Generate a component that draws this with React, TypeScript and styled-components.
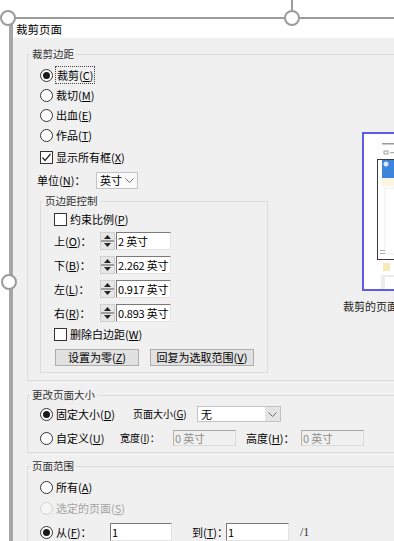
import { ReactNode } from 'react'
import styled, { createGlobalStyle } from 'styled-components'

const GlobalStyle = createGlobalStyle`
	html, body {
		margin: 0;
		padding: 0;
		background: #fff;
	}

	body {
		font-family: "Noto Sans CJK SC", "Noto Sans", sans-serif;
		font-size: 11px;
		line-height: 14px;
		color: #000;
	}
`

const Stage = styled.div`
	position: relative;
	display: flex;
	flex-direction: column;
	width: 394px;
	height: 541px;
	padding: 19px 0 0 13px;
	box-sizing: border-box;
	overflow: hidden;
	background: #fff;
`

const Dialog = styled.div`
	flex: 1;
	display: flex;
	flex-direction: column;
	width: 560px;
`

const TitleBar = styled.div`
	height: 19px;
	display: flex;
	align-items: center;
	padding-left: 3px;
	background: #fff;
	font-size: 11.5px;
`

const Body = styled.div`
	flex: 1;
	padding: 9px 0 0 14px;
	background: #f0f0f0;
`

type GroupProps = {
	$mt?: number
	$ml?: number
	$w?: number
}

const Group = styled.fieldset<GroupProps>`
	margin: ${({ $mt }) => $mt ?? 0}px 0 0 ${({ $ml }) => $ml ?? 0}px;
	padding: 0;
	width: ${({ $w }) => $w ?? 500}px;
	min-width: 0;
	box-sizing: border-box;
	border: 1px solid #dcdcdc;
`

const Legend = styled.legend`
	margin-left: 2px;
	padding: 0 2px;
	line-height: 14px;
	font-size: 10.5px;
	color: #333;
`

const GroupBody = styled.div<{ $pad: string }>`
	padding: ${({ $pad }) => $pad};
`

const Split = styled.div`
	display: flex;
`

const LeftCol = styled.div`
	flex-shrink: 0;
	width: 306px;
`

type RowProps = {
	$h?: number
	$mt?: number
	$ml?: number
}

const Row = styled.div<RowProps>`
	display: flex;
	align-items: center;
	height: ${({ $h }) => $h ?? 20}px;
	margin-top: ${({ $mt }) => $mt ?? 0}px;
	margin-left: ${({ $ml }) => $ml ?? 0}px;
`

const Choice = styled.div<{ $w?: number; $disabled?: boolean }>`
	flex-shrink: 0;
	display: flex;
	align-items: center;
	gap: 3px;
	width: ${({ $w }) => ($w ? `${$w}px` : 'auto')};
	color: ${({ $disabled }) => ($disabled ? '#a3a3a3' : '#000')};
	white-space: nowrap;
`

const RadioMark = styled.span<{ $checked?: boolean; $disabled?: boolean }>`
	flex-shrink: 0;
	display: flex;
	align-items: center;
	justify-content: center;
	width: 13px;
	height: 13px;
	box-sizing: border-box;
	border: 1px solid ${({ $disabled }) => ($disabled ? '#d2d2d2' : '#333')};
	border-radius: 50%;
	background: ${({ $disabled }) => ($disabled ? '#f5f5f5' : '#fff')};

	&::after {
		content: '';
		display: ${({ $checked }) => ($checked ? 'block' : 'none')};
		width: 7px;
		height: 7px;
		border-radius: 50%;
		background: #1a1a1a;
	}
`

const CheckMark = styled.span`
	flex-shrink: 0;
	display: flex;
	align-items: center;
	justify-content: center;
	width: 13px;
	height: 13px;
	box-sizing: border-box;
	border: 1px solid #333;
	background: #fff;
`

const Focus = styled.span`
	outline: 1px dotted #444;
	padding: 0 1px;
`

const Key = styled.span`
	text-decoration: underline;
	text-underline-offset: 1px;
`

const Label = styled.span<{ $w?: number; $size?: number; $ml?: number }>`
	flex-shrink: 0;
	width: ${({ $w }) => ($w ? `${$w}px` : 'auto')};
	margin-left: ${({ $ml }) => $ml ?? 0}px;
	font-size: ${({ $size }) => $size ?? 11}px;
	white-space: nowrap;
`

const Combo = styled.div<{ $w: number; $h: number }>`
	flex-shrink: 0;
	display: flex;
	width: ${({ $w }) => $w}px;
	height: ${({ $h }) => $h}px;
	box-sizing: border-box;
	border: 1px solid #c3c3c3;
	background: #fafafa;
`

const ComboText = styled.span<{ $white?: boolean }>`
	flex: 1;
	display: flex;
	align-items: center;
	padding-left: 3px;
	background: ${({ $white }) => ($white ? '#fff' : 'transparent')};
`

const ComboArrow = styled.span<{ $shade?: boolean }>`
	width: 15px;
	display: flex;
	align-items: center;
	justify-content: center;
	background: ${({ $shade }) => ($shade ? '#e4e4e4' : 'transparent')};
`

const Field = styled.div<{ $w: number; $h?: number; $ml?: number; $disabled?: boolean }>`
	flex-shrink: 0;
	display: flex;
	align-items: center;
	width: ${({ $w }) => $w}px;
	height: ${({ $h }) => $h ?? 18}px;
	margin-left: ${({ $ml }) => $ml ?? 0}px;
	padding-left: 1px;
	box-sizing: border-box;
	border: 1px solid;
	border-color: ${({ $disabled }) => ($disabled ? '#a8a8a8 #dadada #dadada #b4b4b4' : '#7a7a7a #e3e3e3 #e3e3e3 #7a7a7a')};
	background: ${({ $disabled }) => ($disabled ? '#f0f0f0' : '#fff')};
	color: ${({ $disabled }) => ($disabled ? '#8d8d8d' : '#000')};
	white-space: nowrap;
	overflow: hidden;
	letter-spacing: -0.2px;
`

const Button = styled.button<{ $w: number; $ml?: number }>`
	flex-shrink: 0;
	width: ${({ $w }) => $w}px;
	height: 17px;
	margin-left: ${({ $ml }) => $ml ?? 0}px;
	padding: 0;
	border: 1px solid #adadad;
	background: #e1e1e1;
	font: inherit;
	font-size: 11px;
	line-height: 15px;
	color: #000;
	white-space: nowrap;
`

const PreviewCol = styled.div`
	display: flex;
	flex-direction: column;
	margin-top: 67px;
`

const PreviewFrame = styled.div`
	margin-left: 19px;
	width: 80px;
	height: 159px;
	box-sizing: border-box;
	border: 2px solid #5c5ce4;
	background: #fff;
`

const Caption = styled.div`
	margin-top: 8px;
	white-space: nowrap;
	color: #222;
`

const Fraction = styled.span`
	margin-left: 11px;
	font-family: "Liberation Serif", serif;
	font-size: 12px;
	color: #333;
`

const GuideH = styled.span`
	position: absolute;
	left: 8px;
	right: 0;
	top: 17px;
	height: 2px;
	background: #9b9b9b;
`

const GuideV = styled.span`
	position: absolute;
	left: 9px;
	top: 18px;
	bottom: 0;
	width: 4px;
	background: #a6a6a6;
`

const GuideStub = styled.span`
	position: absolute;
	left: 291px;
	top: 0;
	width: 2px;
	height: 10px;
	background: #9b9b9b;
`

const Handle = styled.span<{ $x: number; $y: number }>`
	position: absolute;
	left: ${({ $x }) => $x - 8}px;
	top: ${({ $y }) => $y - 8}px;
	width: 16px;
	height: 16px;
	box-sizing: border-box;
	border: 2.5px solid #9b9b9b;
	border-radius: 50%;
	background: #fff;
`

function Chevron() {
	return (
		<svg width="9" height="5" viewBox="0 0 9 5">
			<polyline points="0.5,0.5 4.5,4.5 8.5,0.5" fill="none" stroke="#6a6a6a" strokeWidth="1" />
		</svg>
	)
}

function Spinner() {
	return (
		<svg width="15" height="18" viewBox="0 0 15 18" style={{ flexShrink: 0 }}>
			<rect x="0.5" y="0.5" width="14" height="17" fill="#e6e6e6" stroke="#cfcfcf" />
			<line x1="1" y1="9" x2="14" y2="9" stroke="#555" />
			<path d="M4 7 L7.5 3 L11 7 Z" fill="#222" />
			<path d="M4 11 L7.5 15 L11 11 Z" fill="#222" />
		</svg>
	)
}

function Radio({ checked, disabled, children, w }: { checked?: boolean; disabled?: boolean; children: ReactNode; w?: number }) {
	return (
		<Choice $w={w} $disabled={disabled}>
			<RadioMark $checked={checked} $disabled={disabled} />
			<span>{children}</span>
		</Choice>
	)
}

function Checkbox({ checked, children }: { checked?: boolean; children: ReactNode }) {
	return (
		<Choice>
			<CheckMark>
				{checked && (
					<svg width="11" height="11" viewBox="0 0 11 11">
						<polyline points="1.5,5.5 4,8.5 9.5,2" fill="none" stroke="#222" strokeWidth="1.2" />
					</svg>
				)}
			</CheckMark>
			<span>{children}</span>
		</Choice>
	)
}

function Thumbnail() {
	return (
		<svg width="76" height="155" viewBox="0 0 76 155">
			<rect x="18" y="9" width="12" height="1.5" fill="#9a9a9a" />
			<rect x="20" y="17" width="4" height="3" fill="none" stroke="#888" strokeWidth="0.8" />
			<rect x="26" y="18" width="7" height="1.2" fill="#aaa" />
			<rect x="18" y="26" width="60" height="18" fill="#3c84dc" />
			<circle cx="22" cy="30" r="2.5" fill="#dbe6f5" />
			<rect x="18" y="44" width="60" height="8" fill="#fbf4de" />
			<rect x="21" y="54" width="60" height="66" fill="#fff" stroke="#e6e6e6" strokeWidth="0.8" />
			<rect x="16" y="116" width="5" height="1" fill="#aaa" />
			<rect x="16" y="119" width="5" height="1" fill="#aaa" />
			<rect x="13.5" y="25.5" width="70" height="100" fill="none" stroke="#3a3a3a" strokeWidth="1" />
			<rect x="19" y="129" width="7" height="8" fill="#f8e9b6" />
			<rect x="17" y="141" width="60" height="14" fill="#ececec" />
			<rect x="21" y="143" width="60" height="12" fill="#fff" />
		</svg>
	)
}

const margins: [string, string, string][] = [
	['上', 'O', '2 英寸'],
	['下', 'B', '2.262 英寸'],
	['左', 'L', '0.917 英寸'],
	['右', 'R', '0.893 英寸'],
]

export default function App() {
	return (
		<>
			<GlobalStyle />
			<Stage>
				<Dialog>
					<TitleBar>裁剪页面</TitleBar>
					<Body>
						<Group>
							<Legend>裁剪边距</Legend>
							<GroupBody $pad="4px 0 7px 9px">
								<Split>
									<LeftCol>
										<Row $ml={3}>
											<Radio checked>
												<Focus>
													裁剪(<Key>C</Key>)
												</Focus>
											</Radio>
										</Row>
										<Row $ml={3}>
											<Radio>
												裁切(<Key>M</Key>)
											</Radio>
										</Row>
										<Row $ml={3}>
											<Radio>
												出血(<Key>E</Key>)
											</Radio>
										</Row>
										<Row $ml={3}>
											<Radio>
												作品(<Key>T</Key>)
											</Radio>
										</Row>
										<Row $ml={3} $mt={2}>
											<Checkbox checked>
												显示所有框(<Key>X</Key>)
											</Checkbox>
										</Row>
										<Row $mt={3}>
											<Label $w={59}>
												单位(<Key>N</Key>)：
											</Label>
											<Combo $w={42} $h={17}>
												<ComboText>英寸</ComboText>
												<ComboArrow>
													<Chevron />
												</ComboArrow>
											</Combo>
										</Row>
										<Group $mt={4} $ml={3} $w={228}>
											<Legend>页边距控制</Legend>
											<GroupBody $pad="1px 0 6px 13px">
												<Row>
													<Checkbox>
														约束比例(<Key>P</Key>)
													</Checkbox>
												</Row>
												{margins.map(([name, key, value]) => (
													<Row key={key} $h={24}>
														<Label $w={46}>
															{name}(<Key>{key}</Key>)：
														</Label>
														<Spinner />
														<Field $w={55} $ml={1}>
															{value}
														</Field>
													</Row>
												))}
												<Row $h={18}>
													<Checkbox>
														删除白边距(<Key>W</Key>)
													</Checkbox>
												</Row>
												<Row $h={17} $mt={6} $ml={1}>
													<Button $w={84}>
														设置为零(<Key>Z</Key>)
													</Button>
													<Button $w={104} $ml={11}>
														回复为选取范围(<Key>V</Key>)
													</Button>
												</Row>
											</GroupBody>
										</Group>
									</LeftCol>
									<PreviewCol>
										<PreviewFrame>
											<Thumbnail />
										</PreviewFrame>
										<Caption>裁剪的页面</Caption>
									</PreviewCol>
								</Split>
							</GroupBody>
						</Group>

						<Group $mt={7}>
							<Legend>更改页面大小</Legend>
							<GroupBody $pad="2px 0 4px 12px">
								<Row>
									<Radio checked w={93}>
										固定大小(<Key>D</Key>)
									</Radio>
									<Label $w={64} $size={10}>
										页面大小(<Key>G</Key>)
									</Label>
									<Combo $w={84} $h={16}>
										<ComboText $white>无</ComboText>
										<ComboArrow $shade>
											<Chevron />
										</ComboArrow>
									</Combo>
								</Row>
								<Row $mt={4}>
									<Radio w={80}>
										自定义(<Key>U</Key>)
									</Radio>
									<Label $w={53} $size={10}>
										宽度(<Key>I</Key>)：
									</Label>
									<Field $w={63} $h={16} $disabled>
										0 英寸
									</Field>
									<Label $w={55} $ml={10}>
										高度(<Key>H</Key>)：
									</Label>
									<Field $w={63} $h={16} $disabled>
										0 英寸
									</Field>
								</Row>
							</GroupBody>
						</Group>

						<Group $mt={6}>
							<Legend>页面范围</Legend>
							<GroupBody $pad="4px 0 4px 12px">
								<Row>
									<Radio>
										所有(<Key>A</Key>)
									</Radio>
								</Row>
								<Row $mt={1}>
									<Radio disabled>
										选定的页面(<Key>S</Key>)
									</Radio>
								</Row>
								<Row $mt={4}>
									<Radio checked w={70}>
										从(<Key>F</Key>)：
									</Radio>
									<Field $w={62}>1</Field>
									<Label $w={34} $ml={20}>
										到(<Key>T</Key>)：
									</Label>
									<Field $w={63}>1</Field>
									<Fraction>/1</Fraction>
								</Row>
							</GroupBody>
						</Group>
					</Body>
				</Dialog>

				<GuideH />
				<GuideV />
				<GuideStub />
				<Handle $x={8} $y={18} />
				<Handle $x={292} $y={17.5} />
				<Handle $x={9} $y={281.5} />
			</Stage>
		</>
	)
}
